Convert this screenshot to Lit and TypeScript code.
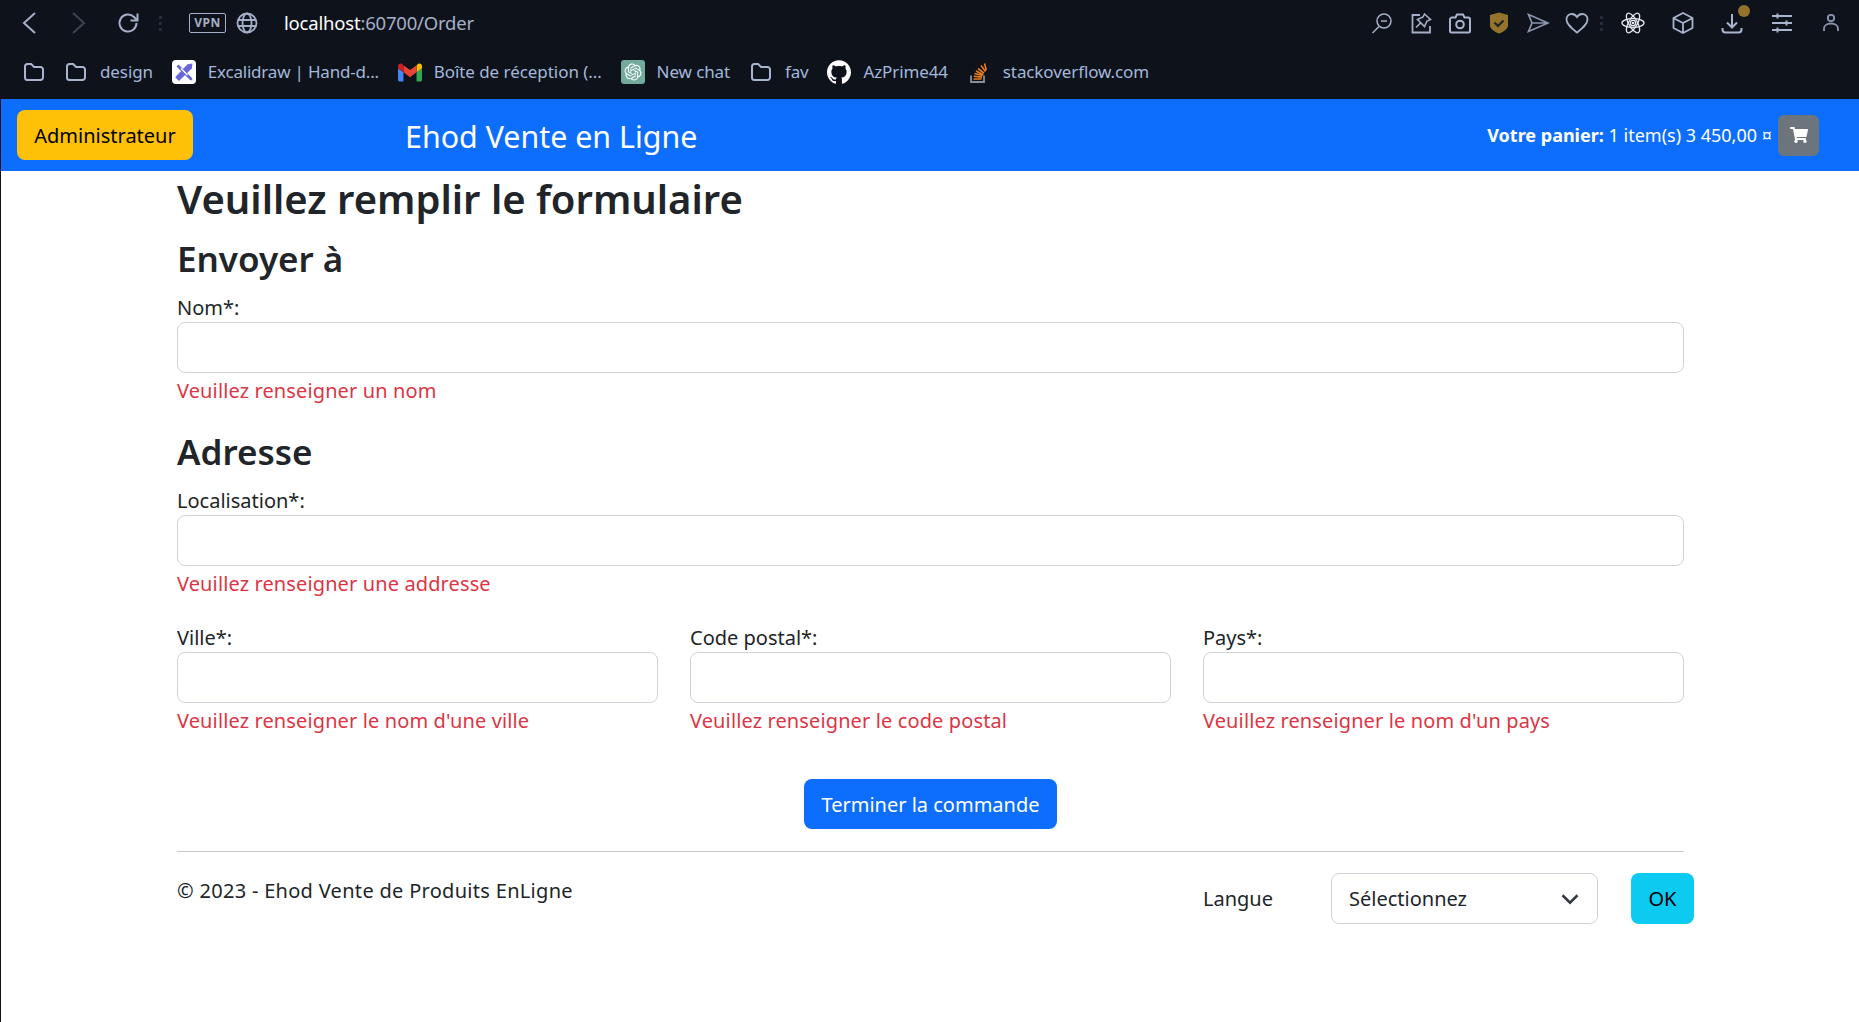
import { LitElement, html, css, svg, nothing } from 'lit';
import { customElement } from 'lit/decorators.js';

const folder = svg`<path d="M3 6.5A2.5 2.5 0 0 1 5.5 4h3.6l3 3h6.4A2.5 2.5 0 0 1 21 9.500V17.500A2.500 2.500 0 0 1 18.500 20h-13A2.500 2.500 0 0 1 3 17.500z" fill="none" stroke="#a9b4cf" stroke-width="2"/>`;

const excalidraw = svg`<rect width="24" height="24" rx="4" fill="#fff"/>
  <path d="M4.500 6.500 6.500 4.500 20 18l.500 2.500-2.500-.500z" fill="#6965db"/>
  <path d="M20.500 3.500 19.800 8.500 7 21 3.200 17.200 15.500 4.300z" fill="#6965db"/>
  <path d="M9 8.500 15.500 15" stroke="#fff" stroke-width="1.200"/>`;

const gmail = svg`<g transform="translate(0 3.500) scale(.2727) translate(-52 -42)">
  <path fill="#4285f4" d="M58 108h14V74L52 59v43c0 3.320 2.690 6 6 6"/>
  <path fill="#34a853" d="M120 108h14c3.320 0 6-2.690 6-6V59l-20 15"/>
  <path fill="#fbbc04" d="M120 48v26l20-15v-8c0-7.420-8.470-11.650-14.400-7.200"/>
  <path fill="#ea4335" d="M72 74V48l24 18 24-18v26L96 92"/>
  <path fill="#c5221f" d="M52 51v8l20 15V48l-5.600-4.200c-5.940-4.450-14.400-.220-14.400 7.200"/>
</g>`;

const chatgpt = svg`<rect width="24" height="24" rx="3" fill="#74aa9c"/>
  <g transform="translate(3.500 3.500) scale(.71)"><path fill="#fff" d="M22.2819 9.8211a5.9847 5.9847 0 0 0-.5157-4.9108 6.0462 6.0462 0 0 0-6.5098-2.9A6.0651 6.0651 0 0 0 4.9807 4.1818a5.9847 5.9847 0 0 0-3.9977 2.9 6.0462 6.0462 0 0 0 .7427 7.0966 5.98 5.98 0 0 0 .511 4.9107 6.051 6.051 0 0 0 6.5146 2.9001A5.9847 5.9847 0 0 0 13.2599 24a6.0557 6.0557 0 0 0 5.7718-4.2058 5.9894 5.9894 0 0 0 3.9977-2.9001 6.0557 6.0557 0 0 0-.7475-7.0729zm-9.022 12.6081a4.4755 4.4755 0 0 1-2.8764-1.0408l.1419-.0804 4.7783-2.7582a.7948.7948 0 0 0 .3927-.6813v-6.7369l2.02 1.1686a.071.071 0 0 1 .038.052v5.5826a4.504 4.504 0 0 1-4.4945 4.4944zm-9.6607-4.1254a4.4708 4.4708 0 0 1-.5346-3.0137l.142.0852 4.783 2.7582a.7712.7712 0 0 0 .7806 0l5.8428-3.3685v2.3324a.0804.0804 0 0 1-.0332.0615L9.74 19.9502a4.4992 4.4992 0 0 1-6.1408-1.6464zM2.3408 7.8956a4.485 4.485 0 0 1 2.3655-1.9728V11.6a.7664.7664 0 0 0 .3879.6765l5.8144 3.3543-2.0201 1.1685a.0757.0757 0 0 1-.071 0l-4.8303-2.7865A4.504 4.504 0 0 1 2.3408 7.872zm16.5963 3.8558L13.1038 8.364 15.1192 7.2a.0757.0757 0 0 1 .071 0l4.8303 2.7913a4.4944 4.4944 0 0 1-.6765 8.1042v-5.6772a.79.79 0 0 0-.407-.667zm2.0107-3.0231l-.142-.0852-4.7735-2.7818a.7759.7759 0 0 0-.7854 0L9.409 9.2297V6.8974a.0662.0662 0 0 1 .0284-.0615l4.8303-2.7866a4.4992 4.4992 0 0 1 6.6802 4.66zM8.3065 12.863l-2.02-1.1638a.0804.0804 0 0 1-.038-.0567V6.0742a4.4992 4.4992 0 0 1 7.3757-3.4537l-.142.0805L8.704 5.459a.7948.7948 0 0 0-.3927.6813zm1.0976-2.3654l2.602-1.4998 2.6069 1.4998v2.9994l-2.5974 1.4997-2.6067-1.4997Z"/></g>`;

const github = svg`<path fill="#fff" d="M12 .297c-6.630 0-12 5.373-12 12 0 5.303 3.438 9.800 8.205 11.385.600.113.820-.258.820-.577 0-.285-.010-1.040-.015-2.040-3.338.724-4.042-1.610-4.042-1.610C4.422 18.070 3.633 17.700 3.633 17.700c-1.087-.744.084-.729.084-.729 1.205.084 1.838 1.236 1.838 1.236 1.070 1.835 2.809 1.305 3.495.998.108-.776.417-1.305.760-1.605-2.665-.300-5.466-1.332-5.466-5.930 0-1.310.465-2.380 1.235-3.220-.135-.303-.540-1.523.105-3.176 0 0 1.005-.322 3.300 1.230.960-.267 1.980-.399 3-.405 1.020.006 2.040.138 3 .405 2.280-1.552 3.285-1.230 3.285-1.230.645 1.653.240 2.873.120 3.176.765.840 1.230 1.910 1.230 3.220 0 4.610-2.805 5.625-5.475 5.920.420.360.810 1.096.810 2.220 0 1.606-.015 2.896-.015 3.286 0 .315.210.690.825.570C20.565 22.092 24 17.592 24 12.297c0-6.627-5.373-12-12-12"/>`;

const stack = svg`<path d="M4 15.500V22h13v-6.500" fill="none" stroke="#8b8f94" stroke-width="1.800"/>
  <path d="M6.500 19h8M6.800 16.300l8.200.800M7.500 13.500l8 2M9 11l7.300 3.800M11 8.500l6 4.700M14 5.500l4.500 6M17.500 3.500l1.800 6.800" stroke="#e87c1e" stroke-width="1.600" fill="none"/>`;

const bookmarks = [
  { icon: folder, label: '' },
  { icon: folder, label: 'design' },
  { icon: excalidraw, label: 'Excalidraw | Hand-d...' },
  { icon: gmail, label: 'Boîte de réception (...' },
  { icon: chatgpt, label: 'New chat' },
  { icon: folder, label: 'fav' },
  { icon: github, label: 'AzPrime44' },
  { icon: stack, label: 'stackoverflow.com' },
];

const tools = [
  svg`<circle cx="14" cy="10" r="7" fill="none" stroke="#a5b0c8" stroke-width="1.500"/><path d="M11 10h6M9 15.500 2.500 22" fill="none" stroke="#a5b0c8" stroke-width="1.500"/>`,
  svg`<path d="M11 4H3.500v17.500H21V15" fill="none" stroke="#a5b0c8" stroke-width="1.800"/><path d="M15.500 3 21.500 8.500 18 10l-2.500 5.500-7-7L14 6zM11.500 12l-4.500 4.500" fill="none" stroke="#a5b0c8" stroke-width="1.600"/>`,
  svg`<path d="M2 8.500A2 2 0 0 1 4 6.500h3.500L9 3.500h6l1.500 3H20a2 2 0 0 1 2 2V20a1.500 1.500 0 0 1-1.500 1.500h-17A1.500 1.500 0 0 1 2 20z" fill="none" stroke="#a9b4cf" stroke-width="2"/><circle cx="12" cy="13.500" r="3.800" fill="none" stroke="#a9b4cf" stroke-width="2"/>`,
  svg`<path d="M12 1.500 21 4v10.500c0 3.500-5 6.700-9 8-4-1.300-9-4.500-9-8V4z" fill="#94742a"/><path d="M7.500 11.500 11 15l5.500-5.500" fill="none" stroke="#20242c" stroke-width="2.200"/>`,
  svg`<path d="M2.500 3.500 22 12 2.500 20.500 6 12zM6 12h16" fill="none" stroke="#8b95ae" stroke-width="1.700"/>`,
  svg`<path d="M12 21.500C7 17.500 1.500 13.500 1.500 8.500 1.500 5 4 3 6.800 3c2.200 0 4 1.100 5.200 3 1.200-1.900 3-3 5.200-3C20 3 22.500 5 22.500 8.500c0 5-5.500 9-10.500 13z" fill="none" stroke="#a5b0c8" stroke-width="1.800"/>`,
];

const tools2 = [
  svg`<g fill="none" stroke="#e6e8ee" stroke-width="1.300"><ellipse cx="12" cy="12" rx="11" ry="4.300"/><ellipse cx="12" cy="12" rx="11" ry="4.300" transform="rotate(60 12 12)"/><ellipse cx="12" cy="12" rx="11" ry="4.300" transform="rotate(120 12 12)"/><circle cx="12" cy="12" r="2.700"/></g><circle cx="12" cy="12" r="1.300" fill="#e6e8ee"/>`,
  svg`<path d="M12 2 21.500 7v10L12 22l-9.500-5V7zM2.800 7.200 12 12l9.200-4.800M12 12v10" fill="none" stroke="#a9b4cf" stroke-width="1.800"/>`,
  svg`<path d="M12 3v13M7 11.500l5 5 5-5M2.500 17v1.500a3 3 0 0 0 3 3h13a3 3 0 0 0 3-3V17" fill="none" stroke="#a9b4cf" stroke-width="2"/>`,
  svg`<path d="M2 5h20M2 12h20M2 19h20" stroke="#a9b4cf" stroke-width="2"/><path d="M7.500 2.500v5M16.500 9.500v5M7.500 16.500v5" stroke="#a9b4cf" stroke-width="2"/>`,
  svg`<circle cx="12" cy="7" r="3.200" fill="none" stroke="#8b95ae" stroke-width="1.800"/><path d="M5 20v-2.500C5 14.500 8 12.500 12 12.500s7 2 7 5V20" fill="none" stroke="#8b95ae" stroke-width="1.800"/>`,
];

const cart = 'M528.12 301.319l47.273-208C578.806 78.301 567.391 64 551.99 64H159.208l-9.166-44.81C147.758 8.021 137.93 0 126.529 0H24C10.745 0 0 10.745 0 24v16c0 13.255 10.745 24 24 24h69.883l70.248 343.435C147.325 417.1 136 435.222 136 456c0 30.928 25.072 56 56 56s56-25.072 56-56c0-15.674-6.447-29.835-16.824-40h209.647C430.447 426.165 424 440.326 424 456c0 30.928 25.072 56 56 56s56-25.072 56-56c0-22.172-12.888-41.332-31.579-50.405l5.517-24.276c3.413-15.018-8.002-29.319-23.403-29.319H218.117l-6.545-32h293.145c11.206 0 20.92-7.754 23.403-18.681z';

@customElement('app-root')
export class AppRoot extends LitElement {
  static styles = css`
    :host {
      display: block;
      min-height: 1022px;
      background: #fff;
      color: #212529;
      font-family: "Noto Sans", sans-serif;
      font-size: 20px;
    }

    .chrome {
      height: 99px;
      background: #0e121b;
      font-family: "Noto Sans", sans-serif;
    }
    .address, .marks, .right { display: flex; align-items: center; }
    .address { height: 46px; }
    .marks { height: 51px; padding-left: 22px; }
    .ico { width: 24px; height: 24px; flex: none; display: block; }
    .back { margin-left: 17px; }
    .forward { margin-left: 26px; }
    .reload { margin-left: 25px; }
    .grip {
      display: flex;
      flex-direction: column;
      gap: 3px;
      width: 3px;
      flex: none;
    }
    .grip i { display: block; width: 3px; height: 3px; background: #252b3a; }
    .left-grip { margin-left: 19px; }
    .vpn {
      margin-left: 27px;
      width: 37px;
      height: 20px;
      box-sizing: border-box;
      border: 1px solid #a5b0c8;
      border-radius: 2px;
      color: #a5b0c8;
      font-size: 12px;
      font-weight: 700;
      line-height: 18px;
      text-align: center;
      letter-spacing: 0.5px;
      flex: none;
    }
    .globe { margin-left: 9px; }
    .url {
      margin: -2px 0 0 25px;
      font-size: 18.5px;
      letter-spacing: -0.2px;
      color: #a5b0c8;
    }
    .url b { font-weight: 400; color: #fff; }
    .right { margin-left: auto; padding-right: 3px; }
    .slot { width: 39px; display: flex; justify-content: center; flex: none; }
    .slot.wide { width: 49.5px; }
    .badged { position: relative; }
    .badge {
      position: absolute;
      top: -6px;
      right: 7px;
      width: 12px;
      height: 12px;
      border-radius: 50%;
      background: #94742a;
    }
    .right .grip { margin: 0 6px 0 3px; }

    .mark { display: flex; align-items: center; gap: 12px; margin-right: 18.8px; }
    .mark:first-child { margin-right: 18px; }
    .mark span { font-size: 17px; letter-spacing: -0.1px; color: #a3b8da; white-space: nowrap; }
    .mark:nth-child(3) span { letter-spacing: -0.2px; }
    .mark:nth-child(4) span { letter-spacing: -0.05px; }

    .page { border-left: 1px solid #0e121b; min-height: 923px; box-sizing: border-box; }

    .nav {
      height: 72px;
      background: #0d6efd;
      display: flex;
      align-items: center;
      padding: 0 40px 0 16px;
      color: #fff;
    }
    .admin {
      width: 176px;
      height: 50px;
      border: 0;
      border-radius: 8px;
      background: #ffc107;
      color: #000;
      font: inherit;
      padding: 0;
      flex: none;
    }
    .brand { margin-left: 212px; font-size: 30.4px; margin-top: 2px; }
    .basket { margin-left: auto; font-size: 18px; }
    .basket b { font-weight: 700; }
    .cart {
      margin-left: 6px;
      width: 41px;
      height: 41px;
      border-radius: 6px;
      background: #6c757d;
      display: flex;
      align-items: center;
      justify-content: center;
    }
    .cart svg { width: 18px; height: 16px; fill: #fff; }

    .content { margin: 0 175px 0 176px; }
    h1, h2 { margin: 0; font-weight: 600; }
    h1 { font-size: 40px; line-height: 48px; padding-top: 4px; }
    h2 { font-size: 35px; line-height: 40px; }
    .first { margin-top: 16px; }
    .second { margin-top: 26px; }
    .form-field { display: flex; flex-direction: column; }
    .gap-label { margin-top: 13px; }
    label, .err { display: block; height: 30px; line-height: 32px; }
    input {
      display: block;
      box-sizing: border-box;
      width: 100%;
      height: 51px;
      border: 1px solid #ced4da;
      border-radius: 8px;
      background: #fff;
    }
    .err { color: #dc3545; margin-top: 3px; line-height: 30px; letter-spacing: 0.12px; }
    .thirds {
      display: grid;
      grid-template-columns: repeat(3, 1fr);
      gap: 32px;
      margin-top: 23px;
    }
    .submit-row { display: flex; justify-content: center; margin-top: 43px; }
    .submit {
      width: 253px;
      height: 50px;
      border: 0;
      border-radius: 8px;
      background: #0d6efd;
      color: #fff;
      font: inherit;
      padding: 0;
    }
    hr { border: 0; border-top: 1px solid #c8c9cb; margin: 22px 0 0; }
    .footer { display: flex; margin-top: 21px; position: relative; }
    .copy { line-height: 30px; margin-top: 3px; letter-spacing: 0.3px; }
    .lang { margin-left: auto; display: flex; align-items: center; width: 481px; flex: none; }
    .lang label { width: 128px; flex: none; line-height: 30px; }
    .select { position: relative; width: 267px; height: 51px; flex: none; }
    select {
      appearance: none;
      width: 100%;
      height: 100%;
      border: 1px solid #ced4da;
      border-radius: 8px;
      background: #fff;
      color: #212529;
      font: inherit;
      padding: 0 16px 0 17px;
    }
    .select svg {
      position: absolute;
      right: 18px;
      top: 16px;
      width: 20px;
      height: 20px;
      pointer-events: none;
    }
    .ok {
      margin-left: 33px;
      width: 63px;
      height: 51px;
      flex: none;
      border: 0;
      border-radius: 8px;
      background: #0dcaf0;
      color: #000;
      font: inherit;
      padding: 0;
    }
  `;

  private grip(cls = '') {
    return html`<div class="grip ${cls}"><i></i><i></i><i></i></div>`;
  }

  private field(name: string, error: string, cls = '') {
    return html`
      <div class="form-field ${cls}">
        <label>${name}</label>
        <input type="text" />
        <div class="err">${error}</div>
      </div>
    `;
  }

  render() {
    return html`
      <div class="chrome">
        <div class="address">
          <svg class="ico back" viewBox="0 0 24 24"><path d="M18 2 7 12l11 10" fill="none" stroke="#a5b0c8" stroke-width="2"/></svg>
          <svg class="ico forward" viewBox="0 0 24 24"><path d="M6 2l11 10L6 22" fill="none" stroke="#3d4452" stroke-width="2"/></svg>
          <svg class="ico reload" viewBox="0 0 24 24"><path d="M20.500 12a8.500 8.500 0 1 1-2.500-6L21 9" fill="none" stroke="#a5b0c8" stroke-width="2"/><path d="M21.500 2.500V9.500H14.500" fill="none" stroke="#a5b0c8" stroke-width="2"/></svg>
          ${this.grip('left-grip')}
          <div class="vpn">VPN</div>
          <svg class="ico globe" viewBox="0 0 24 24"><g fill="none" stroke="#a5b0c8" stroke-width="1.800"><circle cx="12" cy="12" r="9.500"/><ellipse cx="12" cy="12" rx="4.500" ry="9.500"/><path d="M3 9h18M3 15h18"/></g></svg>
          <div class="url"><b>localhost</b>:60700/Order</div>
          <div class="right">
            ${tools.map((t) => html`<div class="slot"><svg class="ico" viewBox="0 0 24 24">${t}</svg></div>`)}
            ${this.grip()}
            ${tools2.map((t, i) => html`
              <div class="slot wide badged">
                <svg class="ico" viewBox="0 0 24 24">${t}</svg>
                ${i === 2 ? html`<span class="badge"></span>` : nothing}
              </div>`)}
          </div>
        </div>
        <div class="marks">
          ${bookmarks.map((b) => html`
            <div class="mark">
              <svg class="ico" viewBox="0 0 24 24">${b.icon}</svg>
              ${b.label ? html`<span>${b.label}</span>` : nothing}
            </div>`)}
        </div>
      </div>

      <div class="page">
        <div class="nav">
          <button class="admin">Administrateur</button>
          <div class="brand">Ehod Vente en Ligne</div>
          <div class="basket"><b>Votre panier:</b> 1 item(s) 3 450,00 ¤</div>
          <div class="cart"><svg viewBox="0 0 576 512"><path d="${cart}"/></svg></div>
        </div>

        <div class="content">
          <h1>Veuillez remplir le formulaire</h1>
          <h2 class="first">Envoyer à</h2>
          ${this.field('Nom*:', 'Veuillez renseigner un nom', 'gap-label')}
          <h2 class="second">Adresse</h2>
          ${this.field('Localisation*:', 'Veuillez renseigner une addresse', 'gap-label')}
          <div class="thirds">
            ${this.field('Ville*:', "Veuillez renseigner le nom d'une ville")}
            ${this.field('Code postal*:', 'Veuillez renseigner le code postal')}
            ${this.field('Pays*:', "Veuillez renseigner le nom d'un pays")}
          </div>
          <div class="submit-row"><button class="submit">Terminer la commande</button></div>
          <hr />
          <div class="footer">
            <div class="copy">© 2023 - Ehod Vente de Produits EnLigne</div>
            <div class="lang">
              <label>Langue</label>
              <div class="select">
                <select><option>Sélectionnez</option></select>
                <svg viewBox="0 0 16 16"><path d="m2 5 6 6 6-6" fill="none" stroke="#343a40" stroke-width="2"/></svg>
              </div>
              <button class="ok">OK</button>
            </div>
          </div>
        </div>
      </div>
    `;
  }
}
